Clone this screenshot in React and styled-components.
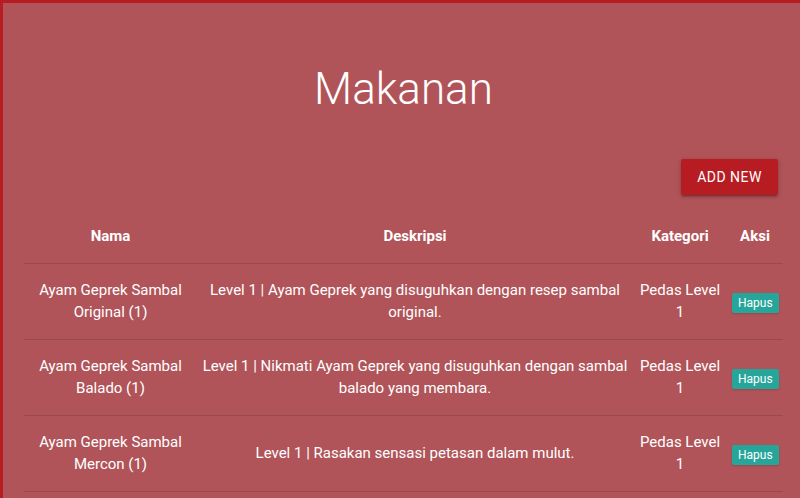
import React from 'react'
import styled, { createGlobalStyle } from 'styled-components'

const GlobalStyle = createGlobalStyle`
  html, body {
    margin: 0;
    padding: 0;
    background: #b05459;
    font-family: Roboto, "Liberation Sans", sans-serif;
    color: #fff;
  }
`

const Page = styled.div`
  min-height: 100vh;
  box-sizing: border-box;
  background: #b05459;
  border-top: 3px solid #b71c22;
  border-left: 3px solid #b71c22;
  padding: 0 17px 0 21px;
  overflow: hidden;
`

const Title = styled.h1`
  margin: 62px 0 0;
  font-size: 44px;
  font-weight: 300;
  line-height: 1.1;
  text-align: center;
  color: #fff;
`

const Toolbar = styled.div`
  display: flex;
  justify-content: flex-end;
  margin-top: 46px;
  margin-bottom: 15px;
  padding-right: 5px;
`

const AddButton = styled.button`
  height: 36px;
  line-height: 36px;
  padding: 0 16px;
  border: none;
  border-radius: 2px;
  background: #b71c22;
  color: #fff;
  font-family: Roboto, "Liberation Sans", sans-serif;
  font-size: 14px;
  letter-spacing: 0.5px;
  text-transform: uppercase;
  box-shadow: 0 2px 2px 0 rgba(0,0,0,0.14), 0 3px 1px -2px rgba(0,0,0,0.12), 0 1px 5px 0 rgba(0,0,0,0.2);
  cursor: pointer;
`

const Table = styled.table`
  width: 100%;
  border-collapse: collapse;
  table-layout: fixed;
  font-size: 15px;
  line-height: 1.5;
`

const Row = styled.tr`
  border-bottom: 1px solid rgba(0,0,0,0.12);
`

const Th = styled.th`
  width: ${({ $w }) => $w}px;
  padding: 15px 5px;
  font-weight: bold;
  text-align: center;
  vertical-align: middle;
`

const Td = styled.td`
  padding: 15px 5px;
  text-align: center;
  vertical-align: middle;
`

const DeleteButton = styled.button`
  height: 20px;
  line-height: 20px;
  padding: 0 6px;
  margin-top: 3px;
  border: none;
  border-radius: 2px;
  background: #26a69a;
  color: #fff;
  font-family: Roboto, "Liberation Sans", sans-serif;
  font-size: 12px;
  box-shadow: 0 1px 2px rgba(0,0,0,0.15);
  cursor: pointer;
`

const makanan = [
  {
    nama: 'Ayam Geprek Sambal Original (1)',
    deskripsi: 'Level 1 | Ayam Geprek yang disuguhkan dengan resep sambal original.',
    kategori: 'Pedas Level 1',
  },
  {
    nama: 'Ayam Geprek Sambal Balado (1)',
    deskripsi: 'Level 1 | Nikmati Ayam Geprek yang disuguhkan dengan sambal balado yang membara.',
    kategori: 'Pedas Level 1',
  },
  {
    nama: 'Ayam Geprek Sambal Mercon (1)',
    deskripsi: 'Level 1 | Rasakan sensasi petasan dalam mulut.',
    kategori: 'Pedas Level 1',
  },
  {
    nama: 'Ayam Geprek Sambal Matah (1)',
    deskripsi: 'Level 1 | Ayam Geprek dengan sambal matah khas Bali.',
    kategori: 'Pedas Level 1',
  },
]

function App() {
  return (
    <>
      <GlobalStyle />
      <Page>
        <Title>Makanan</Title>
        <Toolbar>
          <AddButton>Add New</AddButton>
        </Toolbar>
        <Table>
          <thead>
            <Row>
              <Th $w={163}>Nama</Th>
              <Th $w={426}>Deskripsi</Th>
              <Th $w={84}>Kategori</Th>
              <Th $w={46}>Aksi</Th>
            </Row>
          </thead>
          <tbody>
            {makanan.map((val, key) => (
              <Row key={key}>
                <Td>{val.nama}</Td>
                <Td>{val.deskripsi}</Td>
                <Td>{val.kategori}</Td>
                <Td>
                  <DeleteButton>Hapus</DeleteButton>
                </Td>
              </Row>
            ))}
          </tbody>
        </Table>
      </Page>
    </>
  )
}

export default App
